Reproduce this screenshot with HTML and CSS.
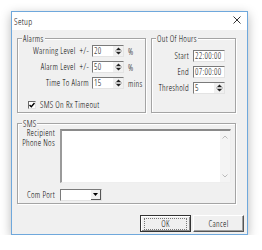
FILE: index.html
```html
<!DOCTYPE html>
<html lang="en">
<head>
    <meta charset="UTF-8">
    <title>Setup</title>
    <link rel="stylesheet" href="styles.css">
</head>
<body>
    <div class="window">
        <!-- Title bar -->
        <div class="titlebar">
            <span class="title">Setup</span>
            <svg class="close" width="8" height="8" viewBox="0 0 8 8">
                <path d="M0.5 0.5L7.5 7.5M7.5 0.5L0.5 7.5" stroke="#333" stroke-width="1" fill="none"/>
            </svg>
        </div>

        <div class="body">
            <div class="top-row">
                <!-- Alarms group -->
                <div class="group alarms">
                    <span class="legend">Alarms</span>
                    <div class="form alarms-form">
                        <span class="label">Warning Level  +/-</span>
                        <div class="spin"><span class="val">20</span><span class="arrows"><svg width="9" height="10" viewBox="0 0 9 10"><path d="M4.5 1.5L7 4H2z M4.5 8.5L7 6H2z" fill="#222"/><path d="M1 5H8" stroke="#999" stroke-width="1"/></svg></span></div>
                        <span class="unit">%</span>

                        <span class="label">Alarm Level  +/-</span>
                        <div class="spin"><span class="val">50</span><span class="arrows"><svg width="9" height="10" viewBox="0 0 9 10"><path d="M4.5 1.5L7 4H2z M4.5 8.5L7 6H2z" fill="#222"/><path d="M1 5H8" stroke="#999" stroke-width="1"/></svg></span></div>
                        <span class="unit">%</span>

                        <span class="label">Time To Alarm</span>
                        <div class="spin"><span class="val">15</span><span class="arrows"><svg width="9" height="10" viewBox="0 0 9 10"><path d="M4.5 1.5L7 4H2z M4.5 8.5L7 6H2z" fill="#222"/><path d="M1 5H8" stroke="#999" stroke-width="1"/></svg></span></div>
                        <span class="unit">mins</span>
                    </div>
                    <div class="check">
                        <span class="box">
                            <svg width="6" height="6" viewBox="0 0 6 6"><path d="M0.5 3L2.3 4.8L5.5 1" stroke="#000" stroke-width="1.4" fill="none"/></svg>
                        </span>
                        <span>SMS On Rx Timeout</span>
                    </div>
                </div>

                <!-- Out of hours group -->
                <div class="group hours">
                    <span class="legend">Out Of Hours</span>
                    <div class="form hours-form">
                        <span class="label">Start</span>
                        <div class="field"><span class="val">22:00:00</span></div>

                        <span class="label">End</span>
                        <div class="field"><span class="val">07:00:00</span></div>

                        <span class="label">Threshold</span>
                        <div class="spin"><span class="val">5</span><span class="arrows"><svg width="9" height="10" viewBox="0 0 9 10"><path d="M4.5 1.5L7 4H2z M4.5 8.5L7 6H2z" fill="#222"/><path d="M1 5H8" stroke="#999" stroke-width="1"/></svg></span></div>
                    </div>
                </div>
            </div>

            <!-- SMS group -->
            <div class="group sms">
                <span class="legend">SMS</span>
                <div class="form sms-form">
                    <div class="label multi">
                        <span>Recipient</span>
                        <span>Phone Nos</span>
                    </div>
                    <div class="textarea">
                        <div class="scrollbar">
                            <svg width="6" height="4" viewBox="0 0 6 4"><path d="M0.5 3.5L3 1L5.5 3.5" stroke="#bbb" fill="none"/></svg>
                            <svg width="6" height="4" viewBox="0 0 6 4"><path d="M0.5 0.5L3 3L5.5 0.5" stroke="#bbb" fill="none"/></svg>
                        </div>
                    </div>

                    <span class="label">Com Port</span>
                    <div class="combo">
                        <span class="drop"><svg width="5" height="3" viewBox="0 0 5 3"><path d="M0 0H5L2.5 3z" fill="#000"/></svg></span>
                    </div>
                </div>
            </div>

            <!-- Dialog buttons -->
            <div class="buttons">
                <button class="btn default"><span class="focus">OK</span></button>
                <button class="btn">Cancel</button>
            </div>
        </div>
    </div>
</body>
</html>
```

FILE: styles.css
```css
/* Global styles */
body {
    margin: 0;
    padding: 11px 0 0 11px;
    background-color: #fff;
    font-family: "Open Sans", "Liberation Sans", Arial, sans-serif;
    font-stretch: 75%;
    font-weight: 300;
    font-size: 8.5px;
    letter-spacing: 0.3px;
    color: #000;
}

/* Dialog window */
.window {
    width: 237px;
    height: 224px;
    box-sizing: border-box;
    border: 1px solid #6fa8dc;
    background-color: #f0f0f0;
    box-shadow: 0 3px 10px rgba(0,0,0,0.28);
    display: flex;
    flex-direction: column;
}
.titlebar {
    height: 18px;
    background-color: #fff;
    display: flex;
    align-items: center;
    justify-content: space-between;
    padding: 0 6px 0 2px;
}
.title {
    font-size: 9px;
}
.close {
    display: block;
    margin-top: -2px;
}

.body {
    flex: 1;
    padding: 8px 3px 0 5px;
}
.top-row {
    display: flex;
    gap: 5px;
}

/* Group boxes */
.group {
    position: relative;
    box-sizing: border-box;
    border: 1px solid #a4a4a4;
    box-shadow: inset 1px 1px 0 #fff, 1px 1px 0 #fff;
}
.legend {
    position: absolute;
    top: -5px;
    left: 4px;
    padding: 0 1px;
    background-color: #f0f0f0;
    line-height: 9px;
}
.alarms {
    width: 129px;
    height: 75px;
    padding-top: 6px;
}
.hours {
    width: 85px;
    height: 75px;
    padding-top: 11px;
}
.sms {
    width: 219px;
    height: 81px;
    margin-top: 10px;
    padding-top: 5px;
}

/* Label / control grids */
.form {
    display: grid;
    row-gap: 4px;
    align-items: center;
}
.alarms-form {
    grid-template-columns: 71px 32px auto;
    column-gap: 3px;
}
.hours-form {
    grid-template-columns: 37px 32px;
    column-gap: 4px;
}
.sms-form {
    grid-template-columns: 37px auto;
    column-gap: 5px;
    row-gap: 6px;
    align-items: start;
}
.label {
    text-align: right;
    white-space: pre;
    line-height: 12px;
}
.label.multi {
    display: flex;
    flex-direction: column;
    align-items: flex-end;
    line-height: 10px;
    margin-top: -1px;
}
.unit {
    margin-left: 1px;
}

/* Inputs */
.field, .spin, .combo {
    height: 12px;
    box-sizing: border-box;
    background-color: #fff;
    border: 1px solid;
    border-color: #7a7a7a #e3e3e3 #e3e3e3 #7a7a7a;
    display: flex;
    align-items: center;
}
.val {
    padding-left: 1px;
    line-height: 10px;
    flex: 1;
}
.arrows {
    width: 10px;
    height: 10px;
    background-color: #f0f0f0;
    display: flex;
    justify-content: center;
}
.arrows svg {
    display: block;
}

/* Checkbox */
.check {
    display: flex;
    align-items: center;
    gap: 4px;
    margin: 10px 0 0 10px;
}
.box {
    width: 8px;
    height: 8px;
    box-sizing: border-box;
    background-color: #fff;
    border: 1px solid;
    border-color: #6a6a6a #e3e3e3 #e3e3e3 #6a6a6a;
    display: flex;
    align-items: center;
    justify-content: center;
}
.box svg {
    display: block;
}

/* Multi-line text box */
.textarea {
    width: 171px;
    height: 54px;
    box-sizing: border-box;
    background-color: #fff;
    border-top: 2px solid #8a8a8a;
    border-left: 2px solid #9a9a9a;
    border-right: 1px solid #eee;
    border-bottom: 1px solid #eee;
    display: flex;
    justify-content: flex-end;
}
.scrollbar {
    width: 10px;
    background-color: #f4f4f4;
    display: flex;
    flex-direction: column;
    justify-content: space-between;
    align-items: center;
    padding: 4px 0;
}

/* Combo box */
.combo {
    width: 42px;
    justify-content: flex-end;
}
.drop {
    width: 10px;
    height: 10px;
    box-sizing: border-box;
    background-color: #f0f0f0;
    border-right: 1px solid #555;
    border-bottom: 1px solid #555;
    display: flex;
    align-items: center;
    justify-content: center;
}
.drop svg {
    display: block;
}

/* Dialog buttons */
.buttons {
    display: flex;
    justify-content: flex-end;
    gap: 2px;
    margin-top: 11px;
}
.btn {
    width: 51px;
    height: 17px;
    padding: 0;
    font: inherit;
    letter-spacing: inherit;
    color: #000;
    background-color: #f0f0f0;
    border: 1px solid;
    border-color: #fff #555 #555 #fff;
    box-shadow: inset -1px -1px 0 #a0a0a0;
}
.btn.default {
    border: 1px solid #333;
    box-shadow: inset 1px 1px 0 #fff, inset -1px -1px 0 #8a8a8a;
    display: flex;
    align-items: center;
    justify-content: center;
}
.focus {
    display: block;
    width: 41px;
    height: 10px;
    line-height: 10px;
    border: 1px dotted #777;
}
```
